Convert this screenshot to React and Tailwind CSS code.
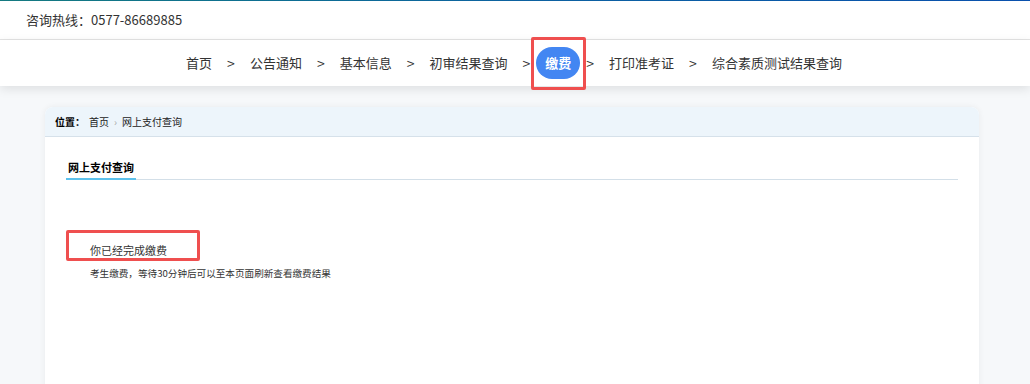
import React from "react";

const font = { fontFamily: '"Noto Sans CJK SC", "Noto Sans", sans-serif' };

function Sep() {
  return <span className="text-[14px] text-[#333] leading-none">&gt;</span>;
}

export default function App() {
  const items = ["首页", "公告通知", "基本信息", "初审结果查询"];
  const after = ["打印准考证", "综合素质测试结果查询"];
  return (
    <div className="w-[1030px] h-[384px] overflow-hidden bg-[#f6f8fa]" style={font}>
      <div className="h-px bg-gradient-to-r from-[#157a80] via-[#0d62a0] to-[#0a50ad]" />
      <div className="h-[39px] bg-white border-b border-[#e4e4e4] flex items-center pl-[26px]">
        <span className="text-[13px] text-[#333]">咨询热线：0577-86689885</span>
      </div>
      <div className="relative z-10 h-[46px] bg-white shadow-[0_3px_10px_rgba(0,0,0,0.10)] flex items-center justify-center gap-[15px] pr-[2px]">
        {items.map((t) => (
          <React.Fragment key={t}>
            <span className="text-[13px] text-[#333]">{t}</span>
            <Sep />
          </React.Fragment>
        ))}
        <span className="relative -mx-[9px]">
          <span className="block h-[32px] px-[9px] rounded-full bg-[#4386f2] text-white text-[13px] font-bold leading-[32px]">
            缴费
          </span>
          <span className="absolute left-[-5px] right-[-6px] top-[-10px] bottom-[-11px] border-[3px] border-[#ef4f4f] rounded-[2px]" />
        </span>
        {after.map((t) => (
          <React.Fragment key={t}>
            <Sep />
            <span className="text-[13px] text-[#333]">{t}</span>
          </React.Fragment>
        ))}
      </div>
      <div className="pt-[21px] pl-[45px]">
        <div className="w-[934px] h-[400px] bg-white rounded-t-[8px] shadow-[0_0_6px_rgba(0,0,0,0.06)]">
          <div className="h-[30px] bg-[#edf5fb] rounded-t-[8px] border-b border-[#d6e1ea] flex items-center pl-[10px] text-[10px] text-[#222]">
            <span className="font-bold text-black">位置：</span>
            <span className="ml-[4px]">首页</span>
            <span className="mx-[5px] text-[#aaa]">›</span>
            <span>网上支付查询</span>
          </div>
          <div className="px-[21px] pt-[22px]">
            <div className="flex border-b border-[#d3dfe8]">
              <span className="text-[11px] font-bold text-black leading-[16px] px-[2px] pb-[3px] border-b-2 border-[#5cc1ec] -mb-px">
                网上支付查询
              </span>
            </div>
            <div className="relative mt-[62px] pl-[24px]">
              <div className="text-[11px] leading-[16px] text-[#333]">你已经完成缴费</div>
              <div className="mt-[8px] text-[9.6px] leading-[14px] text-[#333]">
                考生缴费，等待30分钟后可以至本页面刷新查看缴费结果
              </div>
              <div className="absolute left-0 top-[-12px] w-[134px] h-[31px] border-[3px] border-[#ef4f4f] rounded-[2px]" />
            </div>
          </div>
        </div>
      </div>
    </div>
  );
}
